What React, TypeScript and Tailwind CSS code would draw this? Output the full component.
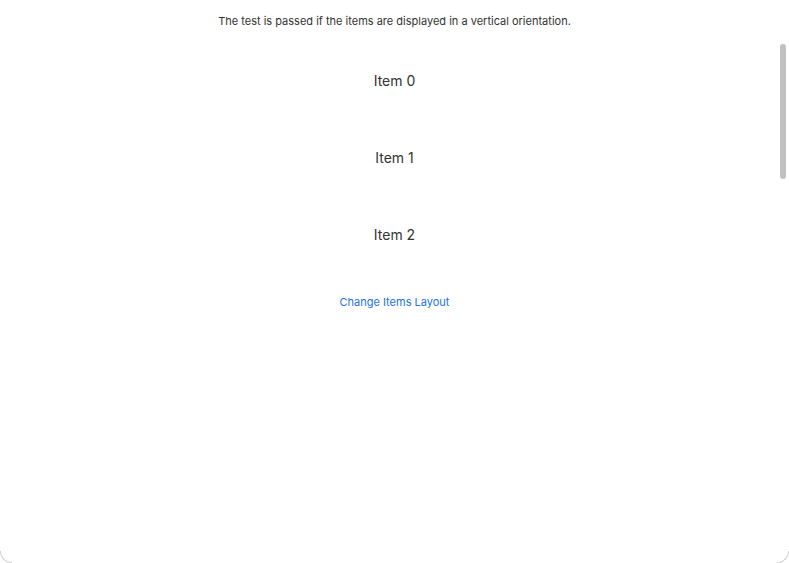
import type React from "react"

const items = ["Item 0", "Item 1", "Item 2"]

const App: React.FC = () => {
  return (
    <div className="relative h-[563px] w-[789px] overflow-hidden bg-white font-['Inter',sans-serif] text-[#333]">
      <p className="pt-[14px] text-center text-[11px] leading-[14px] text-[#333]">
        The test is passed if the items are displayed in a vertical orientation.
      </p>

      <div className="mt-[44px] flex flex-col items-center gap-[59px]">
        {items.map((item) => (
          <div key={item} className="text-[14px] leading-[18px] text-[#333]">
            {item}
          </div>
        ))}
      </div>

      <div className="mt-[44px] text-center">
        <a href="#" className="text-[11px] leading-[14px] text-[#1a73e8]">
          Change Items Layout
        </a>
      </div>

      {/* scrollbar */}
      <div className="absolute right-[3px] top-[44px] h-[135px] w-[6px] rounded-full bg-[#c1c1c1]" />

      {/* window frame corners */}
      <div className="pointer-events-none absolute bottom-0 left-0 h-[12px] w-[12px] rounded-bl-[12px] border-b border-l border-[#d0d0d0]" />
      <div className="pointer-events-none absolute bottom-0 right-0 h-[12px] w-[12px] rounded-br-[12px] border-b border-r border-[#d0d0d0]" />
    </div>
  )
}

export default App
